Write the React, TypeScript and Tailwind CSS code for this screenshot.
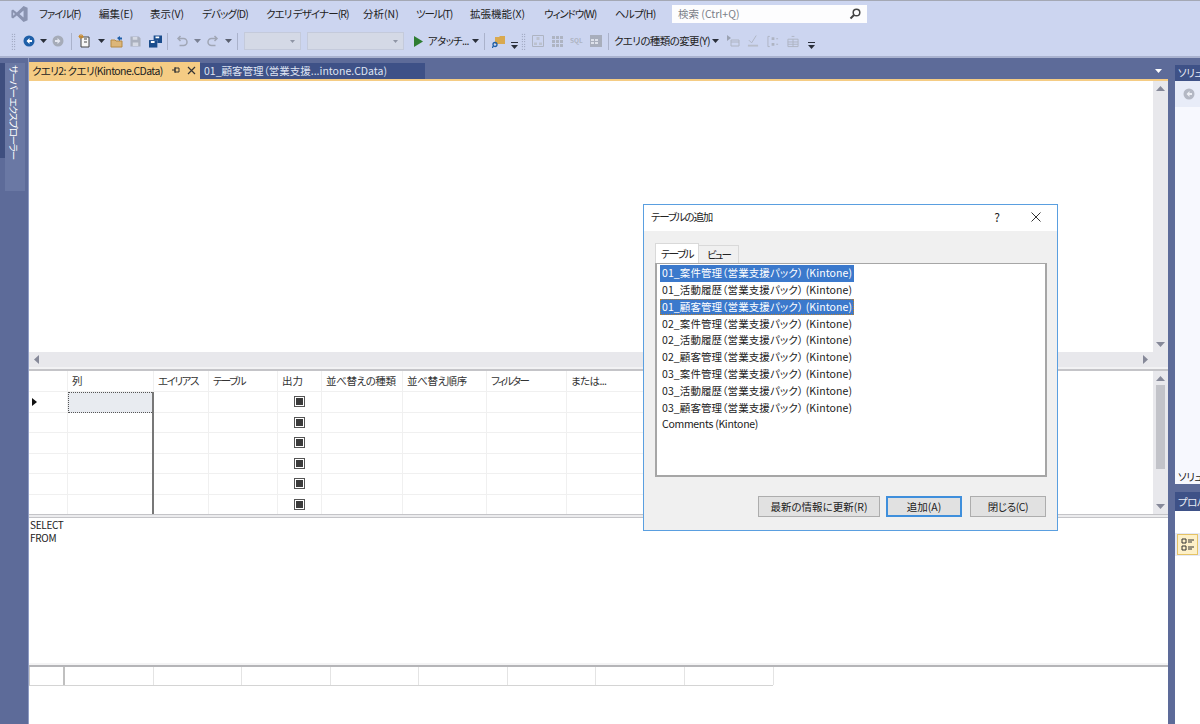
const font = "[font-family:'Noto_Sans_CJK_JP','Liberation_Sans',sans-serif] [font-feature-settings:'palt']";

const menus = [
  { label: "ファイル(F)", cls: "w-[60px] tracking-[-1.1px]" },
  { label: "編集(E)", cls: "w-[51px]" },
  { label: "表示(V)", cls: "w-[52px]" },
  { label: "デバッグ(D)", cls: "w-[64px] tracking-[-0.85px]" },
  { label: "クエリ デザイナー(R)", cls: "w-[97px] tracking-[-0.9px]" },
  { label: "分析(N)", cls: "w-[53px]" },
  { label: "ツール(T)", cls: "w-[54px] tracking-[-1.2px]" },
  { label: "拡張機能(X)", cls: "w-[74px]" },
  { label: "ウィンドウ(W)", cls: "w-[71px] tracking-[-1.1px]" },
  { label: "ヘルプ(H)", cls: "w-[57px] tracking-[-0.7px]" },
];

const tables = [
  "01_案件管理（営業支援パック） (Kintone)",
  "01_活動履歴（営業支援パック） (Kintone)",
  "01_顧客管理（営業支援パック） (Kintone)",
  "02_案件管理（営業支援パック） (Kintone)",
  "02_活動履歴（営業支援パック） (Kintone)",
  "02_顧客管理（営業支援パック） (Kintone)",
  "03_案件管理（営業支援パック） (Kintone)",
  "03_活動履歴（営業支援パック） (Kintone)",
  "03_顧客管理（営業支援パック） (Kintone)",
  "Comments (Kintone)",
];

const gridCols = "grid grid-cols-[39px_86px_55px_69px_44px_81px_84px_80px_81px]";
const headers = [
  { label: "", cls: "" },
  { label: "列", cls: "" },
  { label: "エイリアス", cls: "tracking-[-1.4px]" },
  { label: "テーブル", cls: "tracking-[-1.6px]" },
  { label: "出力", cls: "" },
  { label: "並べ替えの種類", cls: "tracking-[-0.4px]" },
  { label: "並べ替え順序", cls: "tracking-[-0.4px]" },
  { label: "フィルター", cls: "tracking-[-1.8px]" },
  { label: "または...", cls: "tracking-[-0.6px]" },
];

function Arrow({ className = "" }: { className?: string }) {
  return (
    <svg viewBox="0 0 7 4" className={`h-[4px] w-[7px] shrink-0 ${className}`}>
      <path d="M0 0h7L3.5 4z" fill="#2a2f3a" />
    </svg>
  );
}

function Sep({ className = "" }: { className?: string }) {
  return <div className={`h-[17px] w-px shrink-0 bg-[#aab2cb] ${className}`} />;
}

function Grip({ className = "" }: { className?: string }) {
  return (
    <div className={`h-[17px] w-[5px] shrink-0 bg-[radial-gradient(#7d849a_0.6px,transparent_0.8px)] bg-[length:2.5px_2.5px] ${className}`} />
  );
}

function Overflow({ className = "" }: { className?: string }) {
  return (
    <svg viewBox="0 0 7 7" className={`mt-[8px] h-[7px] w-[7px] shrink-0 ${className}`}>
      <path d="M0 0h7v1H0zM0 3h7L3.5 7z" fill="#2a2f3a" />
    </svg>
  );
}

function Combo({ className = "" }: { className?: string }) {
  return (
    <div className={`flex h-[18px] shrink-0 items-center justify-end border border-[#c4cadb] bg-[#d4d9e6] pr-[5px] ${className}`}>
      <svg viewBox="0 0 7 4" className="h-[3px] w-[5px]">
        <path d="M0 0h7L3.5 4z" fill="#8f95a5" />
      </svg>
    </div>
  );
}

function ListBoxRow({ text, index }: { text: string; index: number }) {
  const selected = index === 0 || index === 2;
  return (
    <div className="flex h-[16.8px] items-center">
      <span className={`flex h-[16.8px] items-center whitespace-nowrap px-[2px] text-[10.5px] leading-none ${index === 9 ? "tracking-[-0.3px]" : "tracking-[0.1px]"} ${selected ? "bg-[#3b79cc] text-white" : "text-[#222]"} ${index === 2 ? "outline-1 -outline-offset-1 outline-dotted outline-[#b9812f]" : ""}`}>
        {text}
      </span>
    </div>
  );
}

function DlgButton({ label, cls }: { label: string; cls: string }) {
  return (
    <button className={`flex h-[21px] items-center justify-center bg-[#e1e1e1] text-[10.5px] text-[#222] ${cls}`}>
      {label}
    </button>
  );
}

function CheckCell() {
  return (
    <div className="flex h-full items-center justify-center">
      <div className="flex h-[11px] w-[11px] items-center justify-center border border-[#555] bg-white">
        <div className="h-[7px] w-[7px] bg-[#3a3a3a]" />
      </div>
    </div>
  );
}

export default function App() {
  return (
    <div className={`relative flex h-[724px] w-[1200px] flex-col overflow-hidden bg-[#5d6b99] ${font}`}>
      {/* Menu bar */}
      <div className="flex h-[29px] items-center border-t border-[#a4a8b4] bg-[#ccd5f0] pb-[2px] text-[10.5px] text-[#222]">
        <svg viewBox="0 0 20 20" className="ml-[10px] h-[18px] w-[19px] shrink-0">
          <path d="M14.5 1 19 3v14l-4.5 2L7 11.8 2.8 15 1 14V6l1.8-1L7 8.200zM14.500 6.200 10 10l4.500 3.800zM3 8v4l2-2z" fill="#8a93b0" />
        </svg>
        <div className="ml-[10px] flex">
          {menus.map((m) => (
            <div key={m.label} className={`whitespace-nowrap ${m.cls}`}>{m.label}</div>
          ))}
        </div>
        <div className="flex h-[18px] w-[195px] items-center justify-between bg-[#fdfdfe] pl-[6px] pr-[6px] text-[10.5px] text-[#7b7f88]">
          <span>検索 (Ctrl+Q)</span>
          <svg viewBox="0 0 12 12" className="h-[12px] w-[12px]">
            <circle cx="7.500" cy="4.500" r="3.300" fill="none" stroke="#444" strokeWidth="1.500" />
            <path d="M5 7 1.500 10.500" stroke="#444" strokeWidth="2" />
          </svg>
        </div>
      </div>

      {/* Toolbar */}
      <div className="flex h-[29px] items-center border-b-2 border-[#a9b2cf] bg-[#ccd5f0] pb-[3px] text-[10.5px] text-[#222]">
        <Grip className="ml-[11px]" />
        <svg viewBox="0 0 12 12" className="ml-[7px] h-[12px] w-[12px] shrink-0">
          <circle cx="6" cy="6" r="5.500" fill="#1e5fa8" />
          <path d="M6.500 3 3.500 6l3 3V7h2.500V5H6.500z" fill="#fff" />
        </svg>
        <Arrow className="ml-[5px]" />
        <svg viewBox="0 0 12 12" className="ml-[5px] h-[12px] w-[12px] shrink-0">
          <circle cx="6" cy="6" r="5.500" fill="#a5abb8" />
          <path d="M5.500 3l3 3-3 3V7H3V5h2.500z" fill="#e4e7f0" />
        </svg>
        <Sep className="ml-[7px]" />
        <svg viewBox="0 0 14 14" className="ml-[6px] h-[14px] w-[14px] shrink-0">
          <path d="M4 3h7v10H3V3z" fill="#f6f6f6" stroke="#444" />
          <path d="M6 5h3M6 8h3" stroke="#444" />
          <path d="M3 0v5M0.500 2.500h5M1 1l4 3M5 1 1 4" stroke="#c98a2c" />
        </svg>
        <Arrow className="ml-[6px]" />
        <svg viewBox="0 0 13 13" className="ml-[5px] h-[13px] w-[13px] shrink-0">
          <path d="M1 5h4l1 1h6v6H1z" fill="#dcb67a" stroke="#b58a44" />
          <path d="M7 3 10 1v1.500h2v2h-2V6z" fill="#1e5fa8" />
        </svg>
        <svg viewBox="0 0 12 12" className="ml-[7px] h-[11px] w-[11px] shrink-0">
          <path d="M0.500 0.500h9l2 2v9h-11z" fill="#aab0be" />
          <path d="M3 1h5v3H3zM3 7h6v4H3z" fill="#d5d9e4" />
        </svg>
        <svg viewBox="0 0 14 13" className="ml-[8px] h-[13px] w-[13px] shrink-0">
          <path d="M5 0h9v8H9v-3H5z" fill="#1a4c8c" />
          <path d="M0 5h9v8H0z" fill="#1a4c8c" />
          <path d="M2 6h4v2H2zM7 1h4v2H7z" fill="#fff" />
        </svg>
        <Sep className="ml-[5px]" />
        <svg viewBox="0 0 12 12" className="ml-[8px] h-[12px] w-[12px] shrink-0">
          <path d="M3.500 10.500h4a3.500 3.500 0 0 0 0-7H2M4.500 1 2 3.500 4.500 6" fill="none" stroke="#a0a6b5" strokeWidth="1.500" />
        </svg>
        <Arrow className="ml-[6px] opacity-50" />
        <svg viewBox="0 0 12 12" className="ml-[6px] h-[12px] w-[12px] shrink-0">
          <path d="M8.500 10.500h-4a3.500 3.500 0 0 1 0-7H10M7.500 1 10 3.500 7.500 6" fill="none" stroke="#a0a6b5" strokeWidth="1.500" />
        </svg>
        <Arrow className="ml-[6px] opacity-70" />
        <Sep className="ml-[5px]" />
        <Combo className="ml-[6px] w-[57px]" />
        <Combo className="ml-[6px] w-[97px]" />
        <svg viewBox="0 0 9 11" className="ml-[10px] h-[11px] w-[9px] shrink-0">
          <path d="M0 0 9 5.500 0 11z" fill="#2e7d32" />
        </svg>
        <span className="ml-[5px] w-[41px] shrink-0 whitespace-nowrap tracking-[-0.7px]">アタッチ...</span>
        <Arrow className="ml-[3px]" />
        <Sep className="ml-[5px]" />
        <svg viewBox="0 0 13 13" className="ml-[7px] h-[13px] w-[13px] shrink-0">
          <path d="M3 2h4l1-1h5v8H3z" fill="#d9a94f" />
          <circle cx="3" cy="9.500" r="2" fill="none" stroke="#1e5fa8" strokeWidth="1.300" />
          <path d="M1.500 11 0 13" stroke="#1e5fa8" strokeWidth="1.300" />
        </svg>
        <Overflow className="ml-[6px]" />
        <Grip className="ml-[3px]" />
        <svg viewBox="0 0 12 12" className="ml-[6px] h-[12px] w-[12px] shrink-0">
          <path d="M.5.5h11v11H.500z" fill="none" stroke="#aeb4c2" />
          <path d="M4.500 2h3v3h-3zM2 7.500h3v2.500H2zM7 7.500h3v2.500H7z" fill="#bcc2cf" />
        </svg>
        <svg viewBox="0 0 11 11" className="ml-[8px] h-[11px] w-[11px] shrink-0">
          <path d="M0 0h3v3H0zM4 0h3v3H4zM8 0h3v3H8zM0 4h3v3H0zM4 4h3v3H4zM8 4h3v3H8zM0 8h3v3H0zM4 8h3v3H4zM8 8h3v3H8z" fill="#aeb4c2" />
        </svg>
        <span className="ml-[7px] w-[13px] shrink-0 text-[6.500px] font-bold text-[#aeb4c2]">SQL</span>
        <svg viewBox="0 0 12 12" className="ml-[7px] h-[12px] w-[12px] shrink-0">
          <path d="M0 0h12v12H0z" fill="#a8aebc" />
          <path d="M1 4h3v2H1zM5 4h3v2H5zM1 7h3v2H1zM5 7h3v2H5z" fill="#dde1ea" />
        </svg>
        <Sep className="ml-[6px]" />
        <span className="ml-[5px] w-[97px] shrink-0 whitespace-nowrap tracking-[-0.6px]">クエリの種類の変更(Y)</span>
        <Arrow className="ml-[1px]" />
        <svg viewBox="0 0 13 12" className="ml-[8px] h-[12px] w-[13px] shrink-0">
          <path d="M0 0 4 3 0 6z" fill="#9ba2b2" />
          <path d="M4 5h8v6H4z" fill="none" stroke="#aeb4c2" />
          <path d="M4 7h8" stroke="#aeb4c2" />
        </svg>
        <svg viewBox="0 0 13 13" className="ml-[7px] h-[13px] w-[12px] shrink-0">
          <path d="M2 5 5 8 10 0" fill="none" stroke="#aeb4c2" />
          <path d="M1 10h11v2H1z" fill="#b8bdca" />
        </svg>
        <svg viewBox="0 0 13 13" className="ml-[8px] h-[13px] w-[12px] shrink-0">
          <path d="M1 1v11M1 1h2M1 12h2" fill="none" stroke="#aeb4c2" />
          <path d="M5 2h3v3H5zM5 8h3v3H5zM10 3h2v1h-2zM10 9h2v1h-2z" fill="#aeb4c2" />
        </svg>
        <svg viewBox="0 0 13 13" className="ml-[8px] h-[13px] w-[12px] shrink-0">
          <path d="M1 4h11v8H1zM1 7h11M1 9.500h11M6.500 4v8M5 1h3" fill="none" stroke="#aeb4c2" />
        </svg>
        <Overflow className="ml-[9px]" />
      </div>

      {/* Workspace */}
      <div className="flex min-h-0 flex-1">
        {/* Left rail */}
        <div className="w-[29px] shrink-0 border-r border-[#8f9cc4] pt-[5px]">
          <div className="flex h-[128px] w-[25px]">
            <div className="h-[95px] w-[5px] bg-[#3f4f7f]" />
            <div className="flex w-[20px] justify-start bg-[#6a78a4] pl-px pt-[2px]">
              <span className="text-[9.5px] leading-[16px] tracking-[-1.2px] whitespace-nowrap text-white [writing-mode:vertical-rl] [text-orientation:sideways]">サーバー エクスプローラー</span>
            </div>
          </div>
        </div>

        {/* Center column */}
        <div className="flex w-[1139px] shrink-0 flex-col">
          {/* Tabs */}
          <div className="flex h-[21px] items-end pl-0">
            <div className="flex h-[17px] w-[171px] items-center bg-[#f5cc84] pl-[3px] text-[10.5px] text-[#222]">
              <span className="w-[140px] whitespace-nowrap tracking-[-0.6px]">クエリ2: クエリ(Kintone.CData)</span>
              <svg viewBox="0 0 9 9" className="h-[9px] w-[9px]">
                <path d="M3 2h4v4H3zM3 4H0M3 1v6" fill="none" stroke="#333" />
              </svg>
              <svg viewBox="0 0 9 9" className="ml-[6px] h-[9px] w-[9px]">
                <path d="M1 1l7 7M8 1 1 8" stroke="#333" strokeWidth="1.200" />
              </svg>
            </div>
            <div className="flex h-[16px] w-[225px] items-center self-center bg-[#3e5187] pl-[4px] mt-[5px] text-[10.5px] text-[#dfe4f3]">
              <span className="whitespace-nowrap">01_顧客管理（営業支援...intone.CData)</span>
            </div>
            <div className="flex h-full flex-1 items-center justify-end pr-[6px] pt-[4px]">
              <svg viewBox="0 0 7 4" className="h-[4px] w-[7px]">
                <path d="M0 0h7L3.500 4z" fill="#fff" />
              </svg>
            </div>
          </div>
          <div className="h-[2px] bg-[#f5cc84]" />

          <div className="flex min-h-0 flex-1 flex-col bg-white">
            {/* Diagram pane */}
            <div className="flex h-[271px] shrink-0">
              <div className="flex-1" />
              <div className="flex w-[15px] flex-col items-center justify-between bg-[#e8e8ec] py-[5px]">
                <svg viewBox="0 0 9 5" className="h-[5px] w-[9px]"><path d="M0 5h9L4.500 0z" fill="#868999" /></svg>
                <svg viewBox="0 0 9 5" className="h-[5px] w-[9px]"><path d="M0 0h9L4.500 5z" fill="#868999" /></svg>
              </div>
            </div>
            <div className="flex h-[15px] shrink-0 items-center justify-between bg-[#e8e8ec] pl-[5px] pr-[20px]">
              <svg viewBox="0 0 5 9" className="h-[9px] w-[5px]"><path d="M5 0v9L0 4.500z" fill="#868999" /></svg>
              <svg viewBox="0 0 5 9" className="h-[9px] w-[5px]"><path d="M0 0v9l5-4.500z" fill="#868999" /></svg>
            </div>
            <div className="h-[4px] shrink-0 border-b-2 border-[#c4c4c8] bg-[#f2f2f4]" />

            {/* Criteria grid */}
            <div className="flex h-[143px] shrink-0">
              <div className="flex-1 overflow-hidden">
                <div className={`${gridCols} h-[21px] text-[10.5px] text-[#333]`}>
                  {headers.map((h, i) => (
                    <div key={i} className={`flex items-center whitespace-nowrap border-r border-b border-[#f0f0f0] pl-[4px] ${h.cls}`}>{h.label}</div>
                  ))}
                </div>
                {[0, 1, 2, 3, 4, 5].map((r) => (
                  <div key={r} className={`${gridCols} h-[20.500px]`}>
                    <div className="flex items-center border-r border-b border-[#f0f0f0] pl-[3px]">
                      {r === 0 && (
                        <svg viewBox="0 0 5 8" className="h-[8px] w-[5px]"><path d="M0 0v8l5-4z" fill="#111" /></svg>
                      )}
                    </div>
                    <div className="border-r-2 border-[#777]">
                      {r === 0 ? (
                        <div className="h-full border-y border-l border-dotted border-[#555] bg-[#e8ebf0]" />
                      ) : (
                        <div className="h-full border-b border-[#f0f0f0]" />
                      )}
                    </div>
                    <div className="border-r border-b border-[#f0f0f0]" />
                    <div className="border-r border-b border-[#f0f0f0]" />
                    <div className="border-r border-b border-[#f0f0f0]"><CheckCell /></div>
                    <div className="border-r border-b border-[#f0f0f0]" />
                    <div className="border-r border-b border-[#f0f0f0]" />
                    <div className="border-r border-b border-[#f0f0f0]" />
                    <div className="border-r border-b border-[#f0f0f0]" />
                  </div>
                ))}
              </div>
              <div className="flex w-[15px] flex-col items-center bg-[#e8e8ec] py-[5px]">
                <svg viewBox="0 0 9 5" className="h-[5px] w-[9px]"><path d="M0 5h9L4.500 0z" fill="#868999" /></svg>
                <div className="mt-[4px] h-[84px] w-[9px] bg-[#c2c3c9]" />
                <div className="flex-1" />
                <svg viewBox="0 0 9 5" className="h-[5px] w-[9px]"><path d="M0 0h9L4.500 5z" fill="#868999" /></svg>
              </div>
            </div>
            <div className="h-[4px] shrink-0 border-y border-[#c4c4c8] bg-[#ececee]" />

            {/* SQL pane */}
            <div className="h-[145px] shrink-0 pl-px text-[10px] leading-[13px] tracking-[-0.3px] text-[#222]">
              <div>SELECT</div>
              <div>FROM</div>
            </div>
            <div className="h-[4px] shrink-0 border-b-2 border-[#b5b5b8] bg-[#f4f4f5]" />

            {/* Results grid */}
            <div className="grid h-[19px] w-[744px] shrink-0 grid-cols-[35px_89px_88px_89px_88px_89px_88px_89px_89px] border-b border-[#d4d4d4] border-l border-l-[#c8c8c8]">
              {[0, 1, 2, 3, 4, 5, 6, 7, 8].map((c) => (
                <div key={c} className={`border-r border-[#e4e4e4] ${c === 0 ? "border-r-2 border-r-[#c0c0c0]" : ""}`} />
              ))}
            </div>
          </div>
        </div>

        {/* Right panels */}
        <div className="ml-[7px] flex w-[25px] shrink-0 flex-col overflow-hidden text-[10.5px] tracking-[-0.5px]">
          <div className="mt-[7px] h-[16px] bg-[#3e5187] pl-[3px] leading-[16px] whitespace-nowrap text-[#e8ebf5]">ソリュ</div>
          <div className="flex h-[26px] items-center bg-[#e8ecf8] pl-[8px]">
            <svg viewBox="0 0 12 12" className="h-[12px] w-[12px]">
              <circle cx="6" cy="6" r="5.500" fill="#b4b8c4" />
              <path d="M6.500 3 3.500 6l3 3V7h2.500V5H6.500z" fill="#eceef4" />
            </svg>
          </div>
          <div className="flex h-[377px] items-end bg-[#f7f8fe] pl-[3px] leading-[15px] whitespace-nowrap text-[#222]">ソリュ</div>
          <div className="h-[8px]" />
          <div className="h-[19px] bg-[#3e5187] pl-[3px] leading-[19px] whitespace-nowrap text-[#e8ebf5]">プロパ</div>
          <div className="h-[22px] bg-white" />
          <div className="flex h-[23px] items-center bg-[#e6e9f6] pl-[2px]">
            <div className="flex h-[21px] w-[21px] items-center justify-center border border-[#e5c365] bg-[#fdf0c8]">
              <svg viewBox="0 0 14 14" className="h-[14px] w-[14px]">
                <path d="M1 1h4v4H1zM1 8h4v4H1z" fill="none" stroke="#333" />
                <path d="M7 2h6M7 4h4M7 9h6M7 11h4" stroke="#333" />
              </svg>
            </div>
          </div>
          <div className="flex-1 bg-white" />
        </div>
      </div>

      {/* Add table dialog */}
      <div className="absolute left-[643px] top-[204px] flex h-[327px] w-[415px] flex-col border border-[#5a9fe0] bg-[#f0f0f0]">
        <div className="flex h-[26px] shrink-0 items-center bg-white pb-[2px] pl-[7px] text-[10.5px] text-[#222]">
          <span className="tracking-[-1.2px]">テーブルの追加</span>
          <span className="ml-auto text-[12px]">?</span>
          <svg viewBox="0 0 10 10" className="ml-[31px] mr-[16px] h-[10px] w-[10px]">
            <path d="M0.500 0.500l9 9M9.500 0.500l-9 9" stroke="#333" strokeWidth="1" />
          </svg>
        </div>
        <div className="px-[11px] pt-[12px]">
          <div className="flex h-[20px] items-end text-[10.5px] text-[#222]">
            <div className="flex h-[20px] w-[44px] items-center justify-center border border-b-0 border-[#d9d9d9] bg-white tracking-[-1.5px]">テーブル</div>
            <div className="flex h-[18px] w-[40px] items-center justify-center border border-b-0 border-l-0 border-[#d9d9d9] tracking-[-2px]">ビュー</div>
          </div>
          <div className="h-[214px] w-[392px] border-x-2 border-b-2 border-t border-[#a6a6a6] bg-white pl-[3px] pt-px">
            {tables.map((t, i) => (
              <ListBoxRow key={t} text={t} index={i} />
            ))}
          </div>
          <div className="mt-[19px] flex">
            <DlgButton label="最新の情報に更新(R)" cls="ml-[103px] w-[122px] border border-[#adadad]" />
            <DlgButton label="追加(A)" cls="ml-[6px] w-[76px] border-2 border-[#3f8fdc]" />
            <DlgButton label="閉じる(C)" cls="ml-[8px] w-[76px] border border-[#adadad] tracking-[-0.4px]" />
          </div>
        </div>
      </div>
    </div>
  );
}
